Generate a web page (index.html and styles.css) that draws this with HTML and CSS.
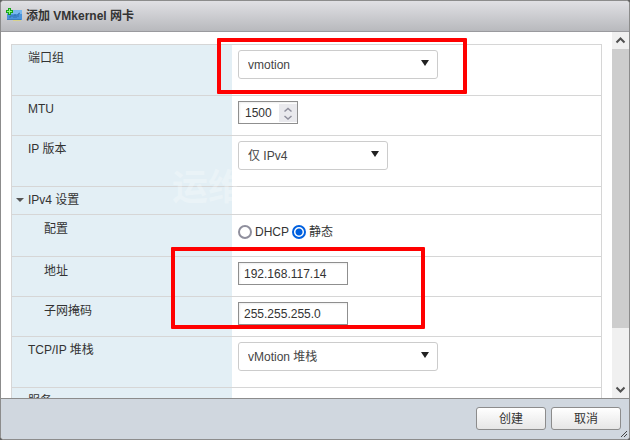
FILE: index.html
```html
<!DOCTYPE html>
<html lang="zh-CN">
<head>
    <meta charset="UTF-8">
    <meta name="viewport" content="width=device-width, initial-scale=1.0">
    <title>添加 VMkernel 网卡</title>
    <link rel="stylesheet" href="styles.css">
</head>
<body>
    <form class="dialog">
        <header class="titlebar">
            <svg class="nic-icon" width="16" height="14" viewBox="0 0 16 14">
                <rect x="1" y="2" width="15" height="10" fill="#4a94dc"/>
                <rect x="1" y="2" width="15" height="4" fill="#79b8ee"/>
                <path d="M4 10V8h3M8 10V7h2v3M12 9V6l2-1" fill="none" stroke="#2f6fb0"/>
                <rect x="1" y="11" width="14" height="1" fill="#3c7fbe"/>
                <rect x="7" y="12" width="8" height="1" fill="#d9d28a"/>
                <path d="M2 0h3v2h2v3H5v2H2V5H0V2h2z" fill="#19a319"/>
                <path d="M3 1h1v2h2v1H4v2H3V4H1V3h2z" fill="#8dfa7c"/>
            </svg>
            <h1>添加 VMkernel 网卡</h1>
        </header>

        <div class="content">
            <div class="scroll-area">
                <div class="settings-wrap">
                    <table class="settings">
                        <tr class="row-tall">
                            <th><label for="portGroup">端口组</label></th>
                            <td>
                                <select id="portGroup" class="wide">
                                    <option>vmotion</option>
                                </select>
                            </td>
                        </tr>
                        <tr>
                            <th><label for="mtu">MTU</label></th>
                            <td>
                                <div class="spinner">
                                    <input type="text" id="mtu" value="1500" inputmode="numeric">
                                    <svg width="18" height="18" viewBox="0 0 18 18">
                                        <path d="M5.500 7.500l3.500-3 3.500 3M5.500 12l3.500 3 3.500-3" fill="none" stroke="#8f8f9d" stroke-width="1.500"/>
                                    </svg>
                                </div>
                            </td>
                        </tr>
                        <tr class="row-tall">
                            <th><label for="ipVersion">IP 版本</label></th>
                            <td>
                                <select id="ipVersion" class="medium">
                                    <option>仅 IPv4</option>
                                </select>
                            </td>
                        </tr>
                        <tr class="row-group">
                            <th><button type="button" class="toggle">IPv4 设置</button></th>
                            <td></td>
                        </tr>
                        <tr class="row-radio">
                            <th class="sub">配置</th>
                            <td>
                                <div class="radios">
                                    <input type="radio" id="dhcp" name="config">
                                    <label for="dhcp">DHCP</label>
                                    <input type="radio" id="static" name="config" checked>
                                    <label for="static">静态</label>
                                </div>
                            </td>
                        </tr>
                        <tr>
                            <th class="sub"><label for="address">地址</label></th>
                            <td><input type="text" id="address" class="text" value="192.168.117.14"></td>
                        </tr>
                        <tr>
                            <th class="sub"><label for="netmask">子网掩码</label></th>
                            <td><input type="text" id="netmask" class="text" value="255.255.255.0"></td>
                        </tr>
                        <tr class="row-tall">
                            <th><label for="stack">TCP/IP 堆栈</label></th>
                            <td>
                                <select id="stack" class="wide">
                                    <option>vMotion 堆栈</option>
                                </select>
                            </td>
                        </tr>
                        <tr class="row-tall">
                            <th>服务</th>
                            <td></td>
                        </tr>
                    </table>
                    <div class="watermark">运维</div>
                    <div class="mark mark-port"></div>
                    <div class="mark mark-address"></div>
                </div>
            </div>
            <div class="scrollbar">
                <svg width="17" height="17" viewBox="0 0 17 17">
                    <path d="M4.500 10.500l4-4 4 4" fill="none" stroke="#505050" stroke-width="2"/>
                </svg>
                <div class="thumb"></div>
                <svg width="17" height="17" viewBox="0 0 17 17">
                    <path d="M4.500 6.500l4 4 4-4" fill="none" stroke="#505050" stroke-width="2"/>
                </svg>
            </div>
        </div>

        <footer class="buttons">
            <button type="button" class="btn">创建</button>
            <button type="button" class="btn">取消</button>
            <svg class="grip" width="6" height="6" viewBox="0 0 6 6">
                <path d="M0 6l6-6M3 6l3-3" stroke="#444" fill="none"/>
            </svg>
        </footer>
    </form>
</body>
</html>
```
FILE: styles.css
```css
* {
    box-sizing: border-box;
}
body {
    margin: 0;
    background-color: #606060;
    color: #333;
    font-family: "Liberation Sans", "Noto Sans CJK SC", sans-serif;
    font-size: 12px;
    line-height: 16px;
}
input, select, button {
    margin: 0;
    font: inherit;
    color: inherit;
}
.dialog {
    display: flex;
    flex-direction: column;
    height: 100vh;
    border: 1px solid #8c8c8c;
    border-radius: 4px;
    overflow: hidden;
    background-color: #fff;
}
.titlebar {
    display: flex;
    align-items: center;
    gap: 4px;
    flex: none;
    height: 31px;
    padding: 0 5px;
    border-bottom: 1px solid #9a9a9e;
    background: linear-gradient(#e0e0e4, #b8b9bd);
}
.titlebar h1 {
    margin: 0;
    font-size: 12px;
}
.nic-icon {
    flex: none;
    margin-bottom: 2px;
}
.content {
    display: flex;
    flex: 1;
    min-height: 0;
}
.scroll-area {
    flex: 1;
    padding: 12px 10px;
    overflow-y: auto;
    scrollbar-width: none;
}
.settings-wrap {
    position: relative;
}
.settings {
    width: 100%;
    table-layout: fixed;
    border-collapse: separate;
    border-spacing: 0;
    border: 1px solid #d6d6d6;
    border-bottom: none;
}
.settings th, .settings td {
    height: 40px;
    vertical-align: top;
    border-bottom: 1px solid #d6d6d6;
}
.settings th {
    width: 220px;
    padding: 5px 16px;
    background-color: #e3eff5;
    font-weight: normal;
    text-align: left;
}
.settings td {
    padding: 5px 6px;
}
.settings th.sub {
    padding-top: 6px;
    padding-left: 32px;
}
.settings .row-tall th, .settings .row-tall td {
    height: 51px;
}
.settings .row-group th, .settings .row-group td {
    height: 28px;
}
.settings .row-radio th, .settings .row-radio td {
    height: 42px;
}
select {
    display: block;
    height: 29px;
    padding: 0 9px;
    border: 1px solid #ccc;
    border-radius: 3px;
    color: #454545;
    appearance: none;
    background: #fff url("data:image/svg+xml,%3Csvg xmlns='http://www.w3.org/2000/svg' width='8' height='6'%3E%3Cpath d='M0 0h8L4 6z' fill='%23222'/%3E%3C/svg%3E") no-repeat right 8px top 9px;
}
.wide {
    width: 200px;
}
.medium {
    width: 150px;
}
.text, .spinner {
    display: block;
    height: 23px;
    border: 1px solid #8f8f8f;
    background-color: #fff;
    box-shadow: inset 1px 1px 2px #eee;
}
.text {
    width: 110px;
    padding: 0 5px;
}
.spinner {
    display: flex;
    align-items: center;
    width: 60px;
    padding-left: 6px;
}
.spinner input {
    flex: 1;
    min-width: 0;
    padding: 0;
    border: none;
    background: none;
}
.spinner svg {
    flex: none;
    background-color: #e9e9ed;
}
.toggle {
    display: flex;
    align-items: center;
    gap: 4px;
    margin-left: -12px;
    padding: 0;
    border: none;
    background: none;
}
.toggle::before {
    content: "";
    border: 4px solid transparent;
    border-top-color: #555;
    border-bottom: none;
}
.radios {
    display: flex;
    align-items: center;
    gap: 3px;
    padding-top: 4px;
}
.radios input {
    appearance: none;
    width: 14px;
    height: 14px;
    border: 2px solid #8f8f9d;
    border-radius: 50%;
    background-color: #fff;
}
.radios input:checked {
    border-color: #0060df;
    background: radial-gradient(circle, #0060df 3px, #fff 4px);
}
.mark {
    position: absolute;
    border: 4px solid #f00;
    border-radius: 1px;
    pointer-events: none;
}
.mark-port {
    top: -6px;
    left: 206px;
    width: 250px;
    height: 56px;
}
.mark-address {
    top: 203px;
    left: 160px;
    width: 254px;
    height: 82px;
}
.watermark {
    position: absolute;
    top: 126px;
    left: 161px;
    color: rgba(255, 255, 255, 0.25);
    font-size: 36px;
    font-weight: bold;
    line-height: 36px;
    white-space: nowrap;
    pointer-events: none;
}
.scrollbar {
    display: flex;
    flex-direction: column;
    justify-content: space-between;
    flex: none;
    width: 17px;
    background-color: #f0f0f0;
}
.thumb {
    flex: 1;
    margin-bottom: 53px;
    background-color: #cdcdcd;
}
.buttons {
    position: relative;
    display: flex;
    justify-content: flex-end;
    gap: 5px;
    flex: none;
    padding: 8px 8px 9px;
    border-top: 1px solid #8c8c8c;
    background-color: #d0d7df;
}
.btn {
    width: 70px;
    height: 23px;
    padding: 0;
    border: 1px solid #8c8c8c;
    border-radius: 3px;
    background: linear-gradient(#fff, #e6e6e6);
}
.grip {
    position: absolute;
    right: 2px;
    bottom: 2px;
}
```
